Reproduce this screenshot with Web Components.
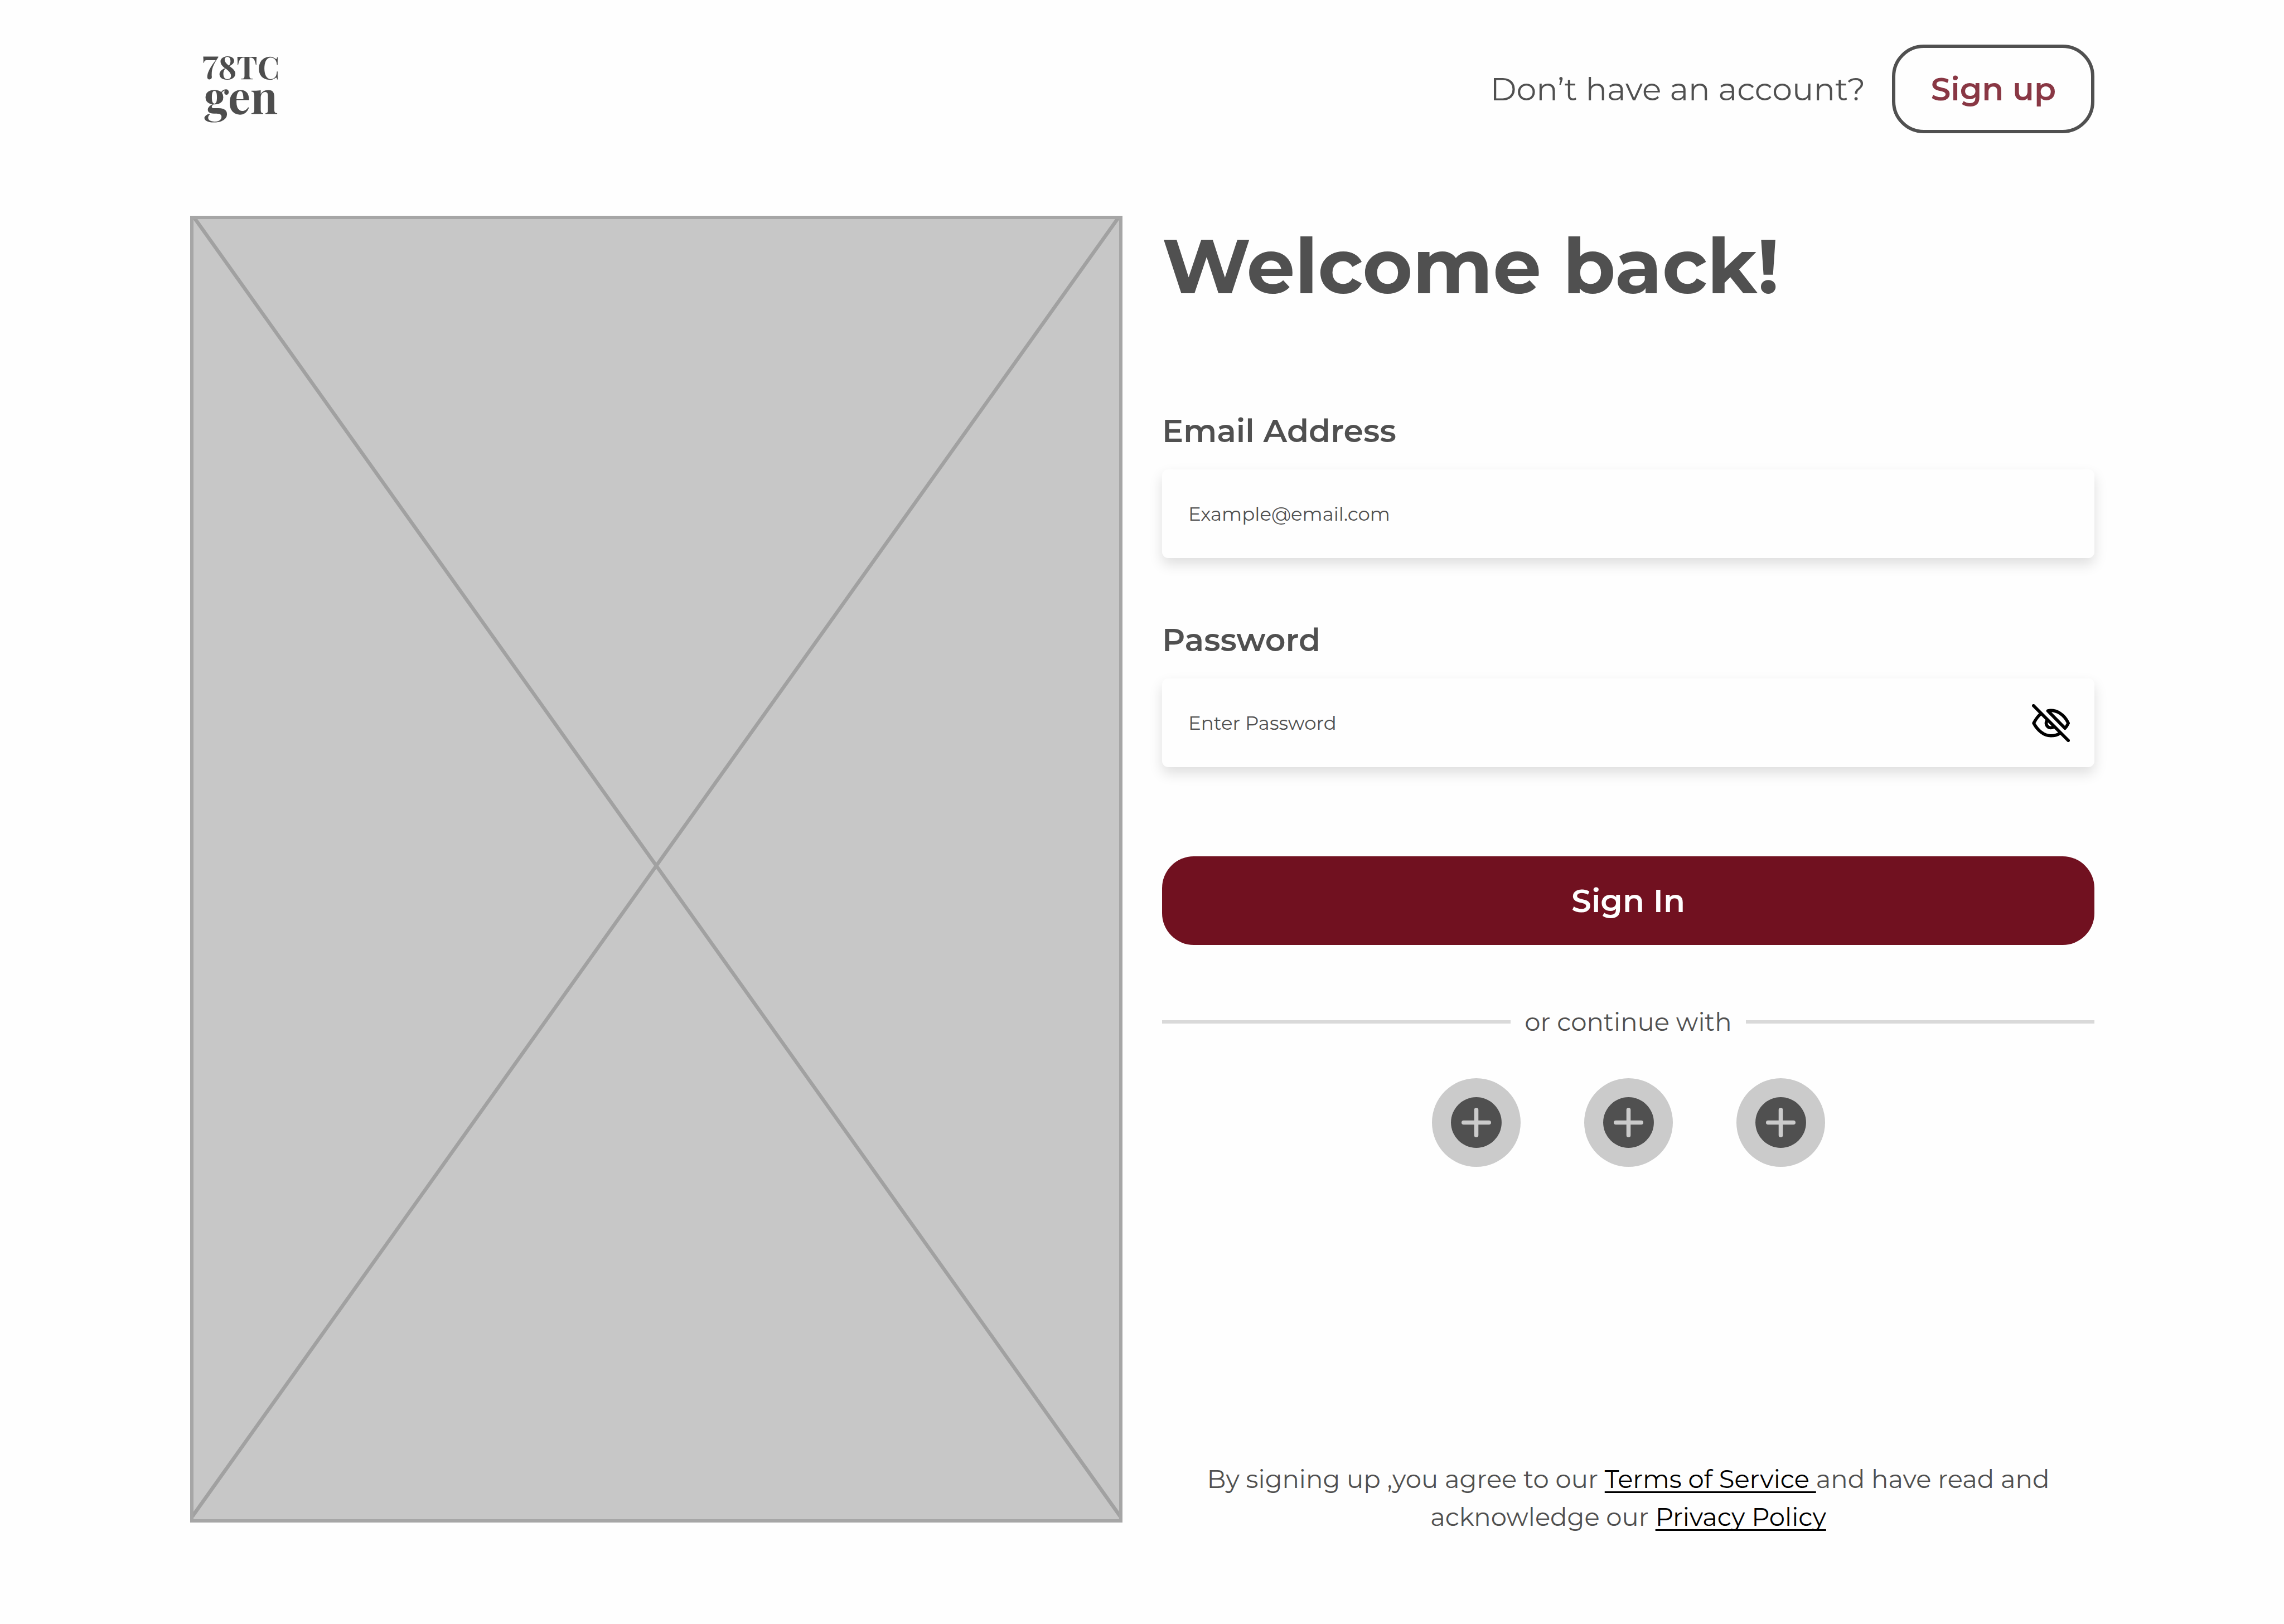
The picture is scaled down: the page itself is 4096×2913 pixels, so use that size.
<!DOCTYPE html>
<html lang="en">
<head>
<meta charset="utf-8">
<title>Sign in</title>
<style>
  body {
    margin: 0;
    background: #fefefe;
    color: #505050;
    font-family: Montserrat, Inter, sans-serif;
  }
</style>
</head>
<body>
<login-page>
  <site-header slot="header"></site-header>
  <image-placeholder slot="media"></image-placeholder>
  <login-form slot="form"></login-form>
</login-page>

<script>
const define = (name, html, init) => {
  const template = document.createElement('template');
  template.innerHTML = '<style>*{box-sizing:border-box}button,input{font:inherit;color:inherit}</style>' + html;
  customElements.define(name, class extends HTMLElement {
    constructor() {
      super();
      this.attachShadow({ mode: 'open' }).append(template.content.cloneNode(true));
    }
    connectedCallback() {
      if (init) init(this, this.shadowRoot);
    }
  });
};

define('login-page', `
  <style>
    :host { display: flex; flex-direction: column; gap: 148px; min-height: 100vh; box-sizing: border-box; padding: 80px 340px 158px 341px; }
    main { flex: 1; display: grid; grid-template-columns: 1fr 1fr; gap: 71px; }
  </style>
  <slot name="header"></slot>
  <main><slot name="media"></slot><slot name="form"></slot></main>
`);

define('brand-logo', `
  <style>
    :host { display: flex; flex-direction: column; align-items: center; padding: 0 0 34px 22px; color: #4d4d4d; font-family: "Playfair Display", "Liberation Serif", serif; font-weight: 700; font-variant-numeric: lining-nums; }
    .top { font-size: 56px; line-height: 56px; }
    .bottom { font-size: 80px; line-height: 48px; }
  </style>
  <span class="top">78TC</span>
  <span class="bottom">gen</span>
`);

define('site-header', `
  <style>
    :host { display: block; }
    header { display: flex; justify-content: space-between; align-items: center; height: 159px; }
    div { display: flex; align-items: center; gap: 48px; font-size: 57px; line-height: 70px; }
    button { height: 159px; padding: 0 63px; border: 6px solid #505050; border-radius: 57px; background: none; color: #893744; font-weight: 600; }
  </style>
  <header>
    <brand-logo></brand-logo>
    <div><span>Don’t have an account?</span><button type="button">Sign up</button></div>
  </header>
`);

define('image-placeholder', `
  <style>
    :host { display: block; align-self: start; aspect-ratio: 1672 / 2344; box-sizing: border-box; border: 6px solid #a6a6a6; background: #c7c7c7; }
    svg { display: block; width: 100%; height: 100%; }
  </style>
  <svg viewBox="0 0 1660 2332" preserveAspectRatio="none" fill="none" stroke="#a1a1a1" stroke-width="6.5" aria-hidden="true">
    <path d="M1 -3L1662 2327M1659 -3L-2 2327"/>
  </svg>
`);

define('form-field', `
  <style>
    :host { display: flex; flex-direction: column; gap: 34px; }
    label { font-size: 57px; line-height: 70px; font-weight: 600; }
    .box { display: flex; align-items: center; height: 159px; padding: 0 44px 0 47px; border-radius: 11px; background: #fefefe; box-shadow: 0 11px 23px rgba(0, 0, 0, .13); }
    input { flex: 1; min-width: 0; height: 100%; padding: 0; border: 0; outline: 0; background: none; font-size: 34px; }
    input::placeholder { color: #505050; opacity: 1; }
  </style>
  <label for="control"></label>
  <div class="box"><input id="control"><slot></slot></div>
`, (host, root) => {
  root.querySelector('label').textContent = host.getAttribute('label');
  const input = root.querySelector('input');
  input.type = host.getAttribute('type');
  input.placeholder = host.getAttribute('placeholder');
});

define('visibility-toggle', `
  <style>
    :host { display: flex; }
    button { display: block; width: 68px; height: 68px; padding: 0; border: 0; background: none; color: #000; }
    svg { display: block; width: 100%; height: 100%; }
  </style>
  <button type="button" aria-label="Show password">
    <svg viewBox="0 0 217 217" fill="none" stroke="currentColor" stroke-width="18" stroke-linecap="round" stroke-linejoin="round">
      <path d="M9 9L208 208"/>
      <path d="M52 54C35 68 21 88 10 109C32 150 68 181 108 181C128 181 146 176 160 167"/>
      <path d="M91 38C142 29 186 62 208 109C203 120 197 130 189 138Z"/>
      <path d="M89 91A26 26 0 0 0 126 128"/>
    </svg>
  </button>
`);

define('text-divider', `
  <style>
    :host { display: flex; align-items: center; gap: 25px; font-size: 45px; line-height: 56px; }
    i { flex: 1; height: 6px; background: #d9d9d9; }
  </style>
  <i></i><span><slot></slot></span><i></i>
`);

define('social-button', `
  <style>
    :host { display: block; }
    button { display: block; width: 159px; height: 159px; padding: 0; border: 0; background: none; }
    svg { display: block; width: 100%; height: 100%; }
  </style>
  <button type="button" aria-label="Continue with another account">
    <svg viewBox="0 0 168 168">
      <circle cx="84" cy="84" r="84" fill="#cbcbcb"/>
      <circle cx="84" cy="84" r="48" fill="#505050"/>
      <path d="M60 84H108M84 60V108" stroke="#cbcbcb" stroke-width="8" stroke-linecap="round"/>
    </svg>
  </button>
`);

define('login-form', `
  <style>
    :host { display: flex; flex-direction: column; padding-top: 7px; }
    h1 { margin: 0 0 178px; font-size: 137px; line-height: 166px; font-weight: 700; }
    form { display: flex; flex-direction: column; }
    .fields { display: flex; flex-direction: column; gap: 112px; }
    .submit { height: 159px; margin: 160px 0 110px; border: 0; border-radius: 57px; background: #711120; color: #fefefe; font-size: 57px; line-height: 70px; font-weight: 600; }
    .social { display: flex; justify-content: center; gap: 114px; margin-top: 73px; }
    p { margin: auto 0 0; font-size: 45px; line-height: 68px; text-align: center; }
    a { color: #000; text-decoration: underline; text-decoration-thickness: 3px; text-underline-offset: 6px; text-decoration-skip-ink: none; }
  </style>
  <h1>Welcome back!</h1>
  <form>
    <div class="fields">
      <form-field label="Email Address" type="email" placeholder="Example@email.com"></form-field>
      <form-field label="Password" type="password" placeholder="Enter Password"><visibility-toggle></visibility-toggle></form-field>
    </div>
    <button class="submit" type="submit">Sign In</button>
  </form>
  <text-divider>or continue with</text-divider>
  <div class="social"><social-button></social-button><social-button></social-button><social-button></social-button></div>
  <p>By signing up ,you agree to our <a href="#terms">Terms of Service </a>and have read and acknowledge our <a href="#privacy">Privacy Policy</a></p>
`);
</script>
</body>
</html>
